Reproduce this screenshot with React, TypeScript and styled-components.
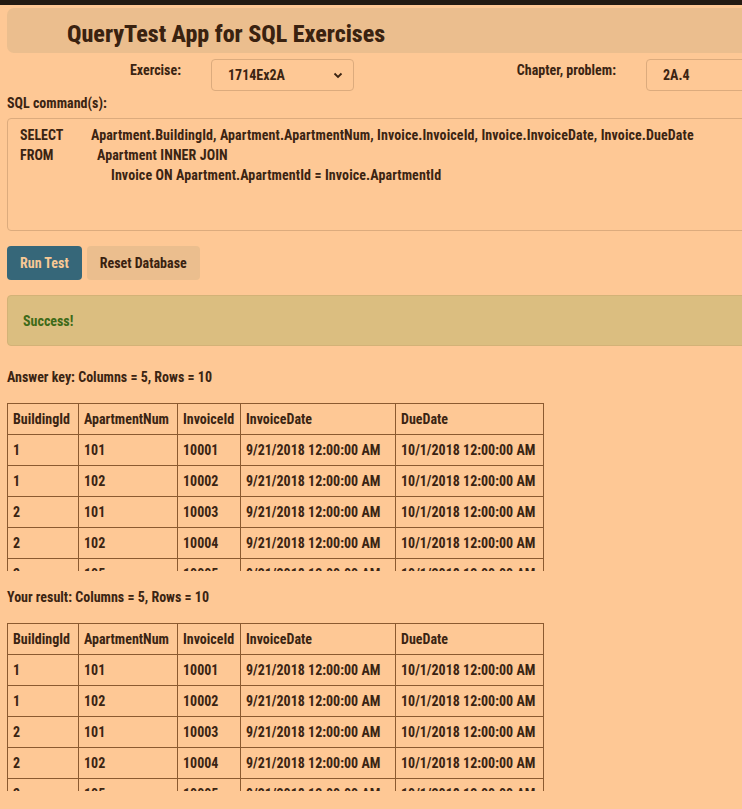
import React from "react";
import styled, { createGlobalStyle } from "styled-components";

const Global = createGlobalStyle`
  html, body { margin: 0; padding: 0; }
  body {
    background: #fec895;
    border-top: 5px solid #231a12;
    overflow: hidden;
    font-family: Roboto, "Liberation Sans", sans-serif;
    font-stretch: 75%;
    font-weight: 700;
    color: #3b2412;
    font-size: 14px;
  }
`;

const Page = styled.div`
  width: 780px;
  padding: 3px 0 0 7px;
  display: flex;
  flex-direction: column;
`;

const Header = styled.div`
  background: #ebbe8e;
  border-radius: 7px;
  height: 45px;
  box-sizing: border-box;
  display: flex;
  align-items: center;
  padding: 6px 0 0 60px;
`;

const Title = styled.h1`
  margin: 0;
  font-size: 24px;
  font-weight: 800;
  font-stretch: 75%;
  color: #3a2210;
`;

const FormRow = styled.div`
  display: grid;
  grid-template-columns: 174px 143px 232px 120px;
  column-gap: 30px;
  margin-top: 6px;
  height: 32px;
`;

const Label = styled.div`
  text-align: right;
  padding-top: 3px;
`;

const Field = styled.div`
  height: 32px;
  box-sizing: border-box;
  border: 1px solid #dcab7d;
  border-radius: 4px;
  display: flex;
  align-items: center;
  justify-content: space-between;
  padding: 0 10px 0 16px;
`;

const SectionLabel = styled.div<{ $top: number }>`
  margin-top: ${(p) => p.$top}px;
  line-height: 18px;
`;

const SqlBox = styled.div`
  margin-top: 6px;
  height: 113px;
  box-sizing: border-box;
  border: 1px solid #dcab7d;
  border-radius: 4px;
  padding: 6px 12px;
  line-height: 20px;
`;

const SqlLine = styled.div`
  display: flex;
  white-space: nowrap;
`;

const Keyword = styled.span`
  width: 71px;
  flex: none;
`;

const Code = styled.span<{ $indent: number }>`
  padding-left: ${(p) => p.$indent}px;
  letter-spacing: 0.1px;
`;

const Buttons = styled.div`
  display: flex;
  gap: 5px;
  margin-top: 15px;
`;

const Button = styled.button<{ $primary?: boolean }>`
  font-family: inherit;
  font-stretch: 75%;
  font-weight: 700;
  font-size: 14px;
  height: 34px;
  border: none;
  border-radius: 4px;
  padding: 0 13px;
  background: ${(p) => (p.$primary ? "#366779" : "#ebbe8e")};
  color: ${(p) => (p.$primary ? "#f8c995" : "#3a2210")};
`;

const Alert = styled.div`
  margin-top: 15px;
  height: 51px;
  box-sizing: border-box;
  background: #dbbe80;
  border: 1px solid #d3b277;
  border-radius: 4px;
  display: flex;
  align-items: center;
  padding-left: 15px;
  color: #3e6a18;
`;

const ResultTitle = styled.div<{ $top: number }>`
  margin-top: ${(p) => p.$top}px;
  line-height: 18px;
`;

const TableWrap = styled.div`
  margin-top: 17px;
  height: 168px;
  overflow: hidden;
  width: 540px;
`;

const Table = styled.table`
  border-collapse: collapse;
  table-layout: fixed;
  width: 536px;
`;

const Col = styled.col<{ $w: number }>`
  width: ${(p) => p.$w}px;
`;

const Th = styled.th`
  border: 1px solid #8b5a30;
  text-align: left;
  padding: 0 5px;
  height: 30px;
  font-weight: 700;
  white-space: nowrap;
`;

const Td = styled.td`
  border: 1px solid #8b5a30;
  padding: 0 5px;
  height: 30px;
  white-space: nowrap;
`;

const columns = ["BuildingId", "ApartmentNum", "InvoiceId", "InvoiceDate", "DueDate"];
const widths = [71, 99, 63, 155, 148];
const rows = [
  ["1", "101", "10001"],
  ["1", "102", "10002"],
  ["2", "101", "10003"],
  ["2", "102", "10004"],
  ["3", "105", "10005"],
  ["3", "106", "10006"],
];

function ResultTable() {
  return (
    <TableWrap>
      <Table>
        <colgroup>
          {widths.map((w, i) => (
            <Col key={i} $w={w} />
          ))}
        </colgroup>
        <thead>
          <tr>
            {columns.map((c) => (
              <Th key={c}>{c}</Th>
            ))}
          </tr>
        </thead>
        <tbody>
          {rows.map((r, i) => (
            <tr key={i}>
              <Td>{r[0]}</Td>
              <Td>{r[1]}</Td>
              <Td>{r[2]}</Td>
              <Td>9/21/2018 12:00:00 AM</Td>
              <Td>10/1/2018 12:00:00 AM</Td>
            </tr>
          ))}
        </tbody>
      </Table>
    </TableWrap>
  );
}

function Chevron() {
  return (
    <svg width="10" height="7" viewBox="0 0 10 7">
      <path d="M1.5 1.5 L5 5 L8.5 1.5" fill="none" stroke="#3b2412" strokeWidth="1.8" />
    </svg>
  );
}

export default function App() {
  return (
    <>
      <Global />
      <Page>
        <Header>
          <Title>QueryTest App for SQL Exercises</Title>
        </Header>
        <FormRow>
          <Label>Exercise:</Label>
          <Field>
            <span>1714Ex2A</span>
            <Chevron />
          </Field>
          <Label>Chapter, problem:</Label>
          <Field>
            <span>2A.4</span>
          </Field>
        </FormRow>
        <SectionLabel $top={3}>SQL command(s):</SectionLabel>
        <SqlBox>
          <SqlLine>
            <Keyword>SELECT</Keyword>
            <Code $indent={0}>
              Apartment.BuildingId, Apartment.ApartmentNum, Invoice.InvoiceId, Invoice.InvoiceDate, Invoice.DueDate
            </Code>
          </SqlLine>
          <SqlLine>
            <Keyword>FROM</Keyword>
            <Code $indent={6}>Apartment INNER JOIN</Code>
          </SqlLine>
          <SqlLine>
            <Keyword />
            <Code $indent={20}>Invoice ON Apartment.ApartmentId = Invoice.ApartmentId</Code>
          </SqlLine>
        </SqlBox>
        <Buttons>
          <Button $primary>Run Test</Button>
          <Button>Reset Database</Button>
        </Buttons>
        <Alert>Success!</Alert>
        <ResultTitle $top={22}>Answer key: Columns = 5, Rows = 10</ResultTitle>
        <ResultTable />
        <ResultTitle $top={17}>Your result: Columns = 5, Rows = 10</ResultTitle>
        <ResultTable />
      </Page>
    </>
  );
}
